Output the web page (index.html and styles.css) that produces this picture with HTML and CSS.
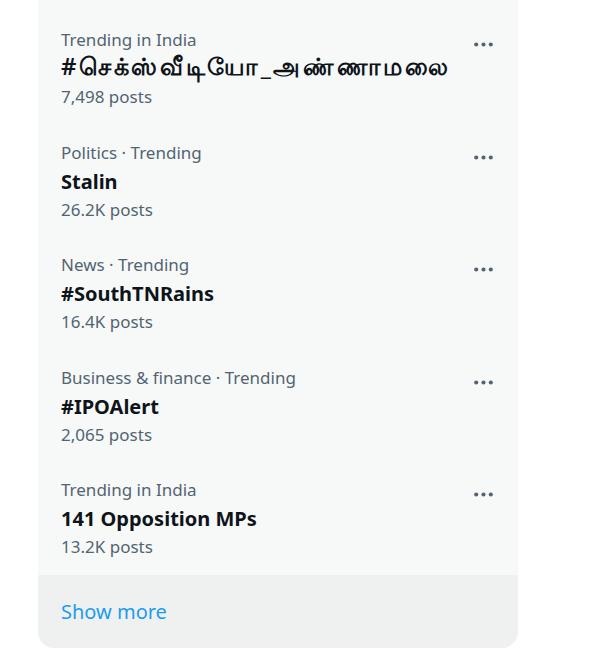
FILE: index.html
```html
<!DOCTYPE html>
<html lang="en">
<head>
<meta charset="utf-8">
<title>Trends</title>
<link rel="stylesheet" href="styles.css">
</head>
<body>
<div class="card">
  <div class="trend">
    <div class="text">
      <div class="meta">Trending in India</div>
      <div class="title tamil">#செக்ஸ்வீடியோ_அண்ணாமலை</div>
      <div class="meta">7,498 posts</div>
    </div>
    <svg class="more" viewBox="0 0 24 24"><circle cx="5" cy="12" r="2"/><circle cx="12" cy="12" r="2"/><circle cx="19" cy="12" r="2"/></svg>
  </div>
  <div class="trend">
    <div class="text">
      <div class="meta">Politics · Trending</div>
      <div class="title">Stalin</div>
      <div class="meta">26.2K posts</div>
    </div>
    <svg class="more" viewBox="0 0 24 24"><circle cx="5" cy="12" r="2"/><circle cx="12" cy="12" r="2"/><circle cx="19" cy="12" r="2"/></svg>
  </div>
  <div class="trend">
    <div class="text">
      <div class="meta">News · Trending</div>
      <div class="title">#SouthTNRains</div>
      <div class="meta">16.4K posts</div>
    </div>
    <svg class="more" viewBox="0 0 24 24"><circle cx="5" cy="12" r="2"/><circle cx="12" cy="12" r="2"/><circle cx="19" cy="12" r="2"/></svg>
  </div>
  <div class="trend">
    <div class="text">
      <div class="meta">Business &amp; finance · Trending</div>
      <div class="title">#IPOAlert</div>
      <div class="meta">2,065 posts</div>
    </div>
    <svg class="more" viewBox="0 0 24 24"><circle cx="5" cy="12" r="2"/><circle cx="12" cy="12" r="2"/><circle cx="19" cy="12" r="2"/></svg>
  </div>
  <div class="trend">
    <div class="text">
      <div class="meta">Trending in India</div>
      <div class="title">141 Opposition MPs</div>
      <div class="meta">13.2K posts</div>
    </div>
    <svg class="more" viewBox="0 0 24 24"><circle cx="5" cy="12" r="2"/><circle cx="12" cy="12" r="2"/><circle cx="19" cy="12" r="2"/></svg>
  </div>
  <div class="show-more">Show more</div>
</div>
</body>
</html>
```

FILE: styles.css
```css
html, body {
  margin: 0;
  padding: 0;
  background: #ffffff;
}
body {
  font-family: "Noto Sans", "Open Sans", sans-serif;
}
.card {
  margin-left: 38px;
  width: 480px;
  background: #f7f9f9;
  border-radius: 0 0 16px 16px;
  padding-top: 12.5px;
  overflow: hidden;
}
.trend {
  display: flex;
  justify-content: space-between;
  align-items: flex-start;
  padding: 13.75px 23px 13.75px 23px;
}
.meta {
  font-size: 17px;
  line-height: 28px;
  color: #536471;
}
.title {
  font-size: 20px;
  line-height: 29px;
  font-weight: 700;
  color: #0f1419;
}
.title.tamil {
  font-size: 24px;
  line-height: 23px;
  margin-bottom: 6px;
  font-weight: 600;
  letter-spacing: 2.6px;
  white-space: nowrap;
}
.more {
  width: 25px;
  height: 25px;
  fill: #536471;
  margin-top: 6px;
  margin-right: -1px;
}
.show-more {
  background: #eff1f1;
  height: 73px;
  display: flex;
  align-items: center;
  padding-left: 23px;
  font-size: 20px;
  color: #1d9bf0;
}
```
